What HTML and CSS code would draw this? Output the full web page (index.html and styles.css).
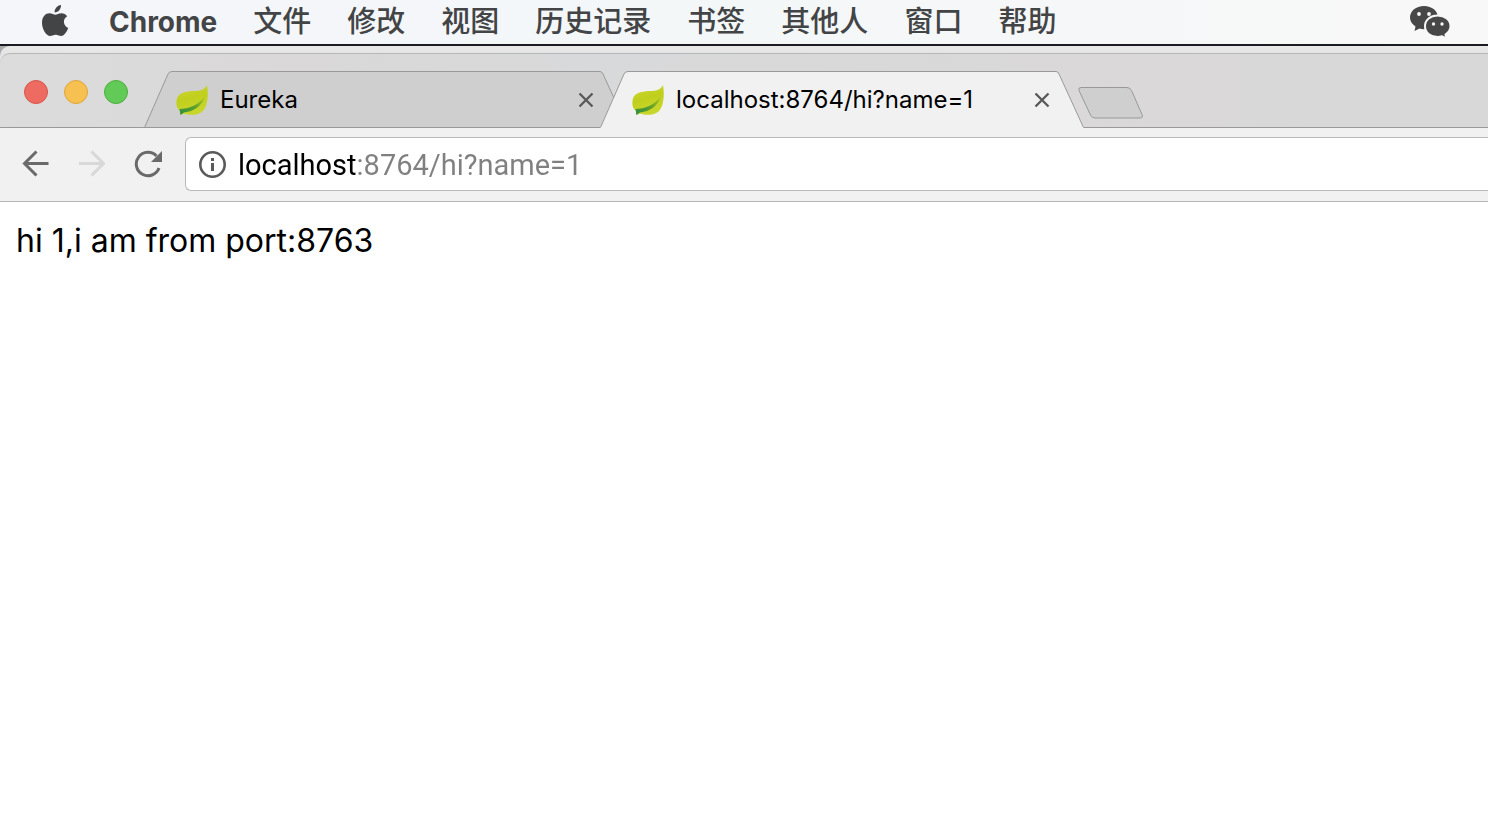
FILE: index.html
```html
<!DOCTYPE html>
<html lang="zh-CN">
<head>
    <meta charset="UTF-8">
    <meta name="viewport" content="width=device-width, initial-scale=1.0">
    <title>localhost:8764/hi?name=1</title>
    <link rel="stylesheet" href="styles.css">
</head>
<body>
    <!-- shared icons -->
    <svg class="sprite" aria-hidden="true">
        <defs>
            <linearGradient id="leaf-fill" x1="0" y1="0" x2="0.3" y2="1">
                <stop offset="0" stop-color="#d2d83c"/>
                <stop offset="0.5" stop-color="#c0cf1c"/>
                <stop offset="1" stop-color="#c8d62c"/>
            </linearGradient>
            <linearGradient id="leaf-vein" x1="0" y1="1" x2="1" y2="0">
                <stop offset="0" stop-color="#2f8f42"/>
                <stop offset="0.5" stop-color="#5a9d2a"/>
                <stop offset="1" stop-color="#b5cb1d"/>
            </linearGradient>
        </defs>
        <symbol id="leaf" viewBox="0 0 32 32">
            <path fill="url(#leaf-fill)" d="M31 1C29 5 26 6.500 20 7C9 7 1 9 0.500 17C0 22 1 25 4 27V31L8 29.500C13 31.500 21 31.500 26 28C31 24 33 13 31 1Z"/>
            <path fill="url(#leaf-vein)" d="M3.500 25C13 25 22 21 29 12.500C26.500 20.500 19 27.500 8 28.500L4.500 31Z"/>
        </symbol>
        <symbol id="close" viewBox="0 0 16 16">
            <path fill="none" stroke="#5a5a5a" stroke-width="2.400" d="M1.500 1.500L14.500 14.500M14.500 1.500L1.500 14.500"/>
        </symbol>
    </svg>

    <header class="menubar">
        <button class="menu-logo" aria-label="Apple">
            <svg width="28" height="34" viewBox="0 0 28 34">
                <path fill="#434446" d="M20 0C20.300 3.800 17.200 7.500 13.600 7.500C13.200 3.900 16.400 0.400 20 0Z"/>
                <path fill="#434446" d="M14.300 9.800C15.900 9.800 17.700 8.200 20.400 8.200C22.700 8.200 24.900 9.300 26.200 11.300C21.300 14 22.100 20.900 27.200 22.900C26.300 25.600 23.300 31 20.200 31C18.200 31 17.200 29.700 14.700 29.700C12.200 29.700 11 31 9.200 31C5.200 31 1 24 1 17.700C1 11.600 4.700 8.300 8.400 8.300C10.900 8.300 12.900 9.800 14.300 9.800Z"/>
            </svg>
        </button>
        <nav class="menu">
            <button class="menu-item app-name">Chrome</button>
            <button class="menu-item">文件</button>
            <button class="menu-item">修改</button>
            <button class="menu-item">视图</button>
            <button class="menu-item">历史记录</button>
            <button class="menu-item">书签</button>
            <button class="menu-item">其他人</button>
            <button class="menu-item">窗口</button>
            <button class="menu-item">帮助</button>
        </nav>
        <button class="menu-status" aria-label="WeChat">
            <svg width="42" height="34" viewBox="0 0 42 34">
                <path fill="#474747" d="M15 1C7 1 1 6 1 12.500C1 16 3 19.200 6.500 21.500L5.500 26L10.500 23.500Q13 24.500 17 24C27 24 29 17 29 12.500C29 6 23 1 15 1Z"/>
                <path fill="#474747" stroke="#f7f7f7" stroke-width="2" d="M28.500 10.500C21.500 10.500 16 15 16 21.200C16 27.300 21.500 32 28.500 32Q31 32 33 31.300L37.500 33.500L36.500 29.500C39.500 27.500 41.500 24.500 41.500 21.200C41.500 15 36 10.500 28.500 10.500Z"/>
                <g fill="#f7f7f7">
                    <circle cx="10" cy="9" r="1.900"/>
                    <circle cx="20" cy="9" r="1.900"/>
                    <circle cx="24.500" cy="19" r="1.700"/>
                    <circle cx="33" cy="19" r="1.700"/>
                </g>
            </svg>
        </button>
    </header>

    <div class="desktop">
        <div class="window">
            <div class="tabstrip">
                <div class="window-buttons">
                    <button class="dot dot-close" aria-label="Close window"></button>
                    <button class="dot dot-minimize" aria-label="Minimize window"></button>
                    <button class="dot dot-zoom" aria-label="Zoom window"></button>
                </div>
                <div class="tabs">
                    <div class="tab">
                        <svg class="tab-shape" viewBox="0 0 484 57" preserveAspectRatio="none">
                            <path fill="#cfcfcf" stroke="#999" d="M0.500 56.500L24 3Q25 0.500 28 0.500H456Q458 0.500 459 3L483.500 56.500Z"/>
                        </svg>
                        <svg class="tab-icon"><use href="#leaf"/></svg>
                        <span class="tab-title">Eureka</span>
                        <button class="tab-close" aria-label="Close tab"><svg width="16" height="16"><use href="#close"/></svg></button>
                    </div>
                    <div class="tab active">
                        <svg class="tab-shape" viewBox="0 0 484 57" preserveAspectRatio="none">
                            <path fill="#f1f1f1" d="M0 57L24 3Q25 0.500 28 0.500H456Q458 0.500 459 3L484 57Z"/>
                            <path fill="none" stroke="#999" d="M0.500 56.500L24 3Q25 0.500 28 0.500H456Q458 0.500 459 3L483.500 56.500"/>
                        </svg>
                        <svg class="tab-icon"><use href="#leaf"/></svg>
                        <span class="tab-title">localhost:8764/hi?name=1</span>
                        <button class="tab-close" aria-label="Close tab"><svg width="16" height="16"><use href="#close"/></svg></button>
                    </div>
                </div>
                <button class="new-tab" aria-label="New tab">
                    <svg width="66" height="32" viewBox="0 0 66 32">
                        <path fill="#cfcfcf" stroke="#999" d="M3 0.500H49Q52 0.500 53.500 3.500L64 27.500Q65.500 31 62 31H17Q14 31 12.500 28L1 3.500Q0 0.500 3 0.500Z"/>
                    </svg>
                </button>
            </div>

            <div class="toolbar">
                <button class="nav-button" aria-label="Back">
                    <svg width="28" height="28" viewBox="0 0 28 28" fill="none" stroke="#6a6a6a" stroke-width="3">
                        <path d="M26.500 13.500H3M14.500 1.500L2.500 13.500L14.500 25.500"/>
                    </svg>
                </button>
                <button class="nav-button" aria-label="Forward" disabled>
                    <svg width="28" height="28" viewBox="0 0 28 28" fill="none" stroke="#d8d8d8" stroke-width="3">
                        <path d="M1 13.500H25M13.500 1.500L25.500 13.500L13.500 25.500"/>
                    </svg>
                </button>
                <button class="nav-button" aria-label="Reload">
                    <svg width="28" height="28" viewBox="0 0 28 28">
                        <path fill="none" stroke="#6a6a6a" stroke-width="3" d="M25 18A11.700 11.700 0 1 1 22.500 6"/>
                        <path fill="#6a6a6a" d="M28 1V12H17Z"/>
                    </svg>
                </button>
                <div class="address-bar">
                    <svg class="info-icon" width="28" height="28" viewBox="0 0 28 28">
                        <circle cx="14.500" cy="14.500" r="12.200" fill="none" stroke="#5a5a5a" stroke-width="2.600"/>
                        <path fill="#5a5a5a" d="M13 8H16V11H13ZM13 13H16V21H13Z"/>
                    </svg>
                    <input class="address" type="text" aria-label="Address" value="localhost:8764/hi?name=1" spellcheck="false">
                </div>
            </div>

            <main class="page">hi 1,i am from port:8763</main>
        </div>
    </div>
</body>
</html>
```
FILE: styles.css
```css
* {
    margin: 0;
    padding: 0;
    box-sizing: border-box;
}

body {
    min-height: 100vh;
    display: flex;
    flex-direction: column;
    font-family: Inter, "Noto Sans CJK SC", sans-serif;
    background-color: white;
    overflow-x: hidden;
}

button {
    border: none;
    background: none;
    font: inherit;
    color: inherit;
    cursor: pointer;
}

svg {
    display: block;
}

.sprite {
    position: absolute;
    width: 0;
    height: 0;
}

/* menu bar */
.menubar {
    display: flex;
    align-items: center;
    height: 46px;
    padding: 0 37px 0 41px;
    background: linear-gradient(to right, #f4f6fa, #f4f7f8 50%, #f8f8f8);
    border-bottom: 2px solid #1b1c21;
    color: #434446;
}

.menu {
    display: flex;
    flex: 1;
    gap: 36px;
    margin-left: 40px;
}

.menu-item {
    font-size: 29px;
    font-weight: 500;
    line-height: 46px;
    white-space: nowrap;
}

.app-name {
    font-size: 28px;
    font-weight: 700;
    line-height: 44px;
}

/* window */
.desktop {
    flex: 1;
    display: flex;
    background-color: #a9abad;
}

.window {
    flex: 1;
    display: flex;
    flex-direction: column;
    min-width: 0;
    padding-top: 7px;
    background: linear-gradient(#e9e9e9, #e4e4e4 8px);
    border-top-left-radius: 10px;
}

.tabstrip {
    display: flex;
    align-items: flex-end;
    height: 75px;
    padding-left: 24px;
    border-top: 1px solid #b5b7b8;
    border-top-left-radius: 10px;
    background: linear-gradient(#999, #999) bottom / 100% 1px no-repeat,
        linear-gradient(to right, #dcdcdc, #dad8d8 18%, #d8d9da 40%, #dad8d8 75%, #d8d8d8);
}

.window-buttons {
    display: flex;
    gap: 16px;
    margin-bottom: 24px;
}

.dot {
    width: 24px;
    height: 24px;
    border-radius: 50%;
}

.dot-close {
    background-color: #ed6b60;
    border: 1px solid #d9544b;
}

.dot-minimize {
    background-color: #f6c150;
    border: 1px solid #dea53b;
}

.dot-zoom {
    background-color: #62ca56;
    border: 1px solid #4bae3e;
}

.tabs {
    display: flex;
    margin-left: 16px;
    min-width: 0;
}

.tab {
    position: relative;
    display: flex;
    align-items: center;
    gap: 12px;
    flex: 0 1 484px;
    width: 484px;
    height: 57px;
    padding: 0 34px 0 32px;
}

.tab + .tab {
    margin-left: -28px;
}

.tab-shape {
    position: absolute;
    inset: 0;
    width: 100%;
    height: 100%;
}

.tab-icon,
.tab-title,
.tab-close {
    position: relative;
}

.tab-icon {
    width: 32px;
    height: 32px;
}

.tab-title {
    flex: 1;
    font-size: 24px;
    line-height: 32px;
    white-space: nowrap;
    overflow: hidden;
}

.new-tab {
    margin: 0 0 9px -6px;
}

/* toolbar */
.toolbar {
    display: flex;
    align-items: center;
    gap: 28px;
    height: 74px;
    padding: 0 0 1px 22px;
    background-color: #f1f1f1;
    border-bottom: 1px solid #b6b6b6;
}

.address-bar {
    flex: 1;
    display: flex;
    align-items: center;
    gap: 12px;
    height: 54px;
    margin-left: -5px;
    padding-left: 12px;
    background-color: white;
    border: 1px solid #b8b8b8;
    border-right: none;
    border-radius: 6px 0 0 6px;
}

/* host name is black, the rest of the address is grey */
.address {
    flex: 1;
    min-width: 0;
    height: 42px;
    padding-top: 2px;
    border: none;
    outline: none;
    font: 29px/40px Roboto, sans-serif;
    color: transparent;
    caret-color: black;
    background: linear-gradient(to right, black 118px, #808080 118px);
    -webkit-background-clip: text;
    background-clip: text;
}

/* page */
.page {
    flex: 1;
    padding: 16px;
    background-color: white;
    font-size: 32px;
    line-height: 46px;
    color: black;
}
```
